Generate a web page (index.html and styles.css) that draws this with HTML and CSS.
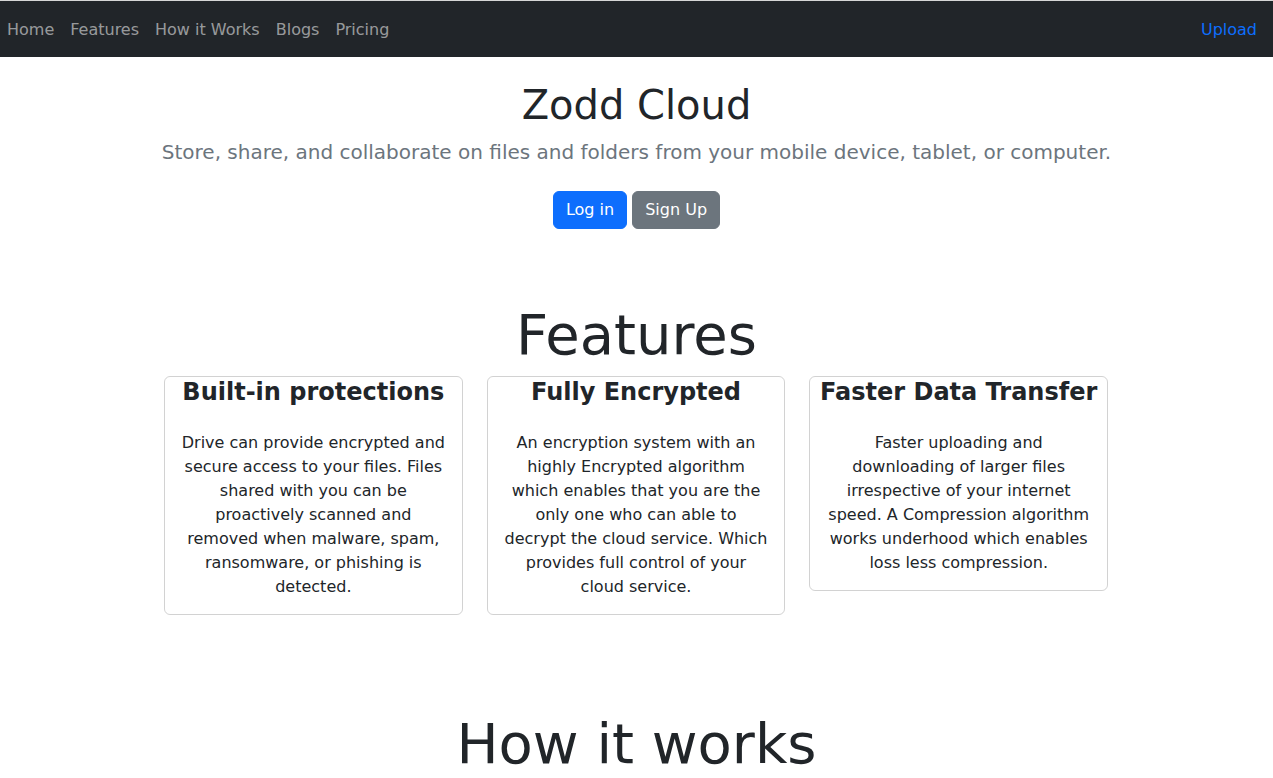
FILE: index.html
```html
<!DOCTYPE html>
<html lang="en">
<head>
<meta charset="utf-8">
<title>Zodd Cloud</title>
<link rel="stylesheet" href="styles.css">
</head>
<body>
<nav class="navbar">
  <ul class="nav-list">
    <li><a class="nav-link" href="#">Home</a></li>
    <li><a class="nav-link" href="#">Features</a></li>
    <li><a class="nav-link" href="#">How it Works</a></li>
    <li><a class="nav-link" href="#">Blogs</a></li>
    <li><a class="nav-link" href="#">Pricing</a></li>
  </ul>
  <a class="nav-link upload" href="#">Upload</a>
</nav>

<header class="hero">
  <h1 class="hero-title">Zodd Cloud</h1>
  <p class="lead">Store, share, and collaborate on files and folders from your mobile device, tablet, or computer.</p>
  <div class="hero-actions">
    <a class="btn btn-primary" href="#">Log in</a>
    <a class="btn btn-secondary" href="#">Sign Up</a>
  </div>
</header>

<section class="features">
  <h2 class="display">Features</h2>
  <div class="cards">
    <div class="card">
      <h4 class="card-title">Built-in protections</h4>
      <p class="card-text">Drive can provide encrypted and secure access to your files. Files shared with you can be proactively scanned and removed when malware, spam, ransomware, or phishing is detected.</p>
    </div>
    <div class="card">
      <h4 class="card-title">Fully Encrypted</h4>
      <p class="card-text">An encryption system with an highly Encrypted algorithm which enables that you are the only one who can able to decrypt the cloud service. Which provides full control of your cloud service.</p>
    </div>
    <div class="card">
      <h4 class="card-title">Faster Data Transfer</h4>
      <p class="card-text">Faster uploading and downloading of larger files irrespective of your internet speed. A Compression algorithm works underhood which enables loss less compression.</p>
    </div>
  </div>
</section>

<section class="how">
  <h2 class="display">How it works</h2>
</section>
</body>
</html>
```

FILE: styles.css
```css
* { box-sizing: border-box; }

html, body {
  margin: 0;
  padding: 0;
}

body {
  font-family: "DejaVu Sans", sans-serif;
  font-size: 16px;
  line-height: 1.5;
  color: #212529;
  background: #fff;
  border-top: 1px solid #d6d6d6;
}

a { text-decoration: none; }

.navbar {
  display: flex;
  align-items: center;
  justify-content: space-between;
  height: 56px;
  background: #212529;
  padding: 0 8px 0 0;
}

.nav-list {
  display: flex;
  list-style: none;
  margin: 0 0 0 -1px;
  padding: 0;
}

.nav-link {
  display: block;
  padding: 9px 8px 7px;
  color: rgba(255, 255, 255, 0.55);
  font-size: 16px;
  line-height: 24px;
}

.nav-link.upload {
  color: #0d6efd;
}

.hero {
  text-align: center;
  padding-top: 24px;
}

.hero-title {
  font-size: 40px;
  font-weight: 400;
  line-height: 1.2;
  margin: 0 0 8px;
}

.lead {
  font-size: 20px;
  font-weight: 400;
  line-height: 1.5;
  color: #6c757d;
  margin: 0 0 24px;
}

.hero-actions {
  display: flex;
  justify-content: center;
  gap: 5px;
}

.btn {
  display: inline-block;
  padding: 6px 12px;
  font-size: 16px;
  line-height: 24px;
  color: #fff;
  border: 1px solid transparent;
  border-radius: 6px;
}

.btn-primary {
  background: #0d6efd;
  border-color: #0d6efd;
}

.btn-secondary {
  background: #6c757d;
  border-color: #6c757d;
}

.features {
  margin-top: 72px;
  text-align: center;
}

.display {
  font-size: 56px;
  font-weight: 400;
  line-height: 1.2;
  margin: 0 0 8px;
}

.cards {
  width: 944px;
  margin-left: calc(50% - 472.5px);
  display: flex;
  gap: 24px;
  align-items: flex-start;
}

.card {
  flex: 1 1 0;
  border: 1px solid rgba(0, 0, 0, 0.175);
  border-radius: 6px;
  text-align: center;
}

.card-title {
  font-size: 24px;
  font-weight: 700;
  line-height: 1.2;
  margin: 1px 0 24px;
  white-space: nowrap;
}

.card-text {
  margin: 0 0 15px;
  padding: 0 16px;
}

.how {
  margin-top: 95px;
  text-align: center;
}
```
